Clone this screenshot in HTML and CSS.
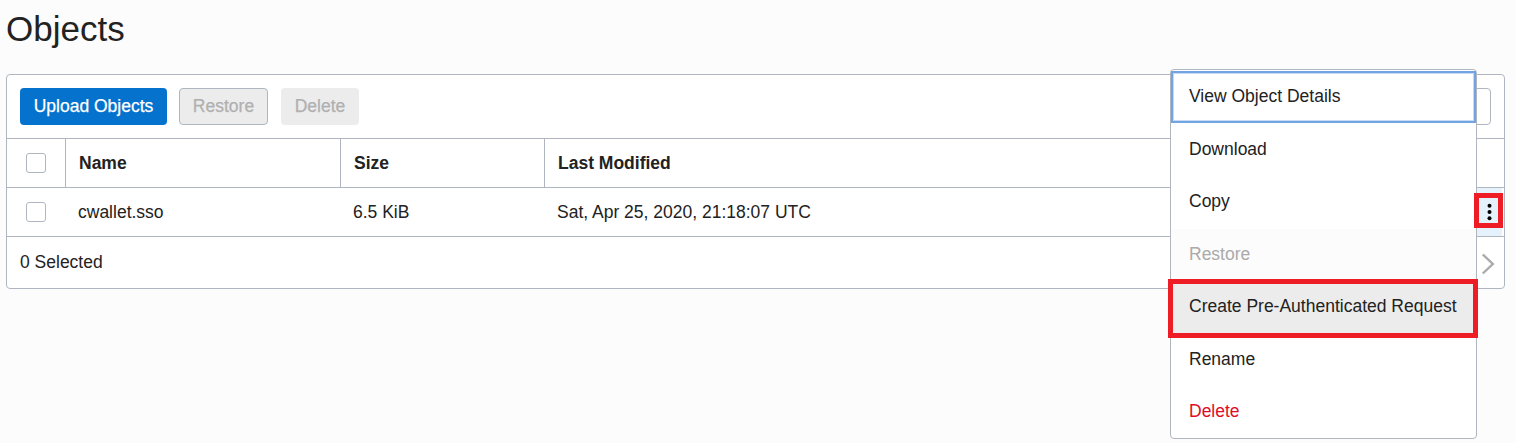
FILE: index.html
```html
<!DOCTYPE html>
<html lang="en">
<head>
<meta charset="utf-8">
<title>Objects</title>
<link rel="stylesheet" href="styles.css">
</head>
<body>
<h1 class="title">Objects</h1>
<section class="card">
  <div class="toolbar">
    <button class="btn primary">Upload Objects</button>
    <button class="btn outlined" disabled>Restore</button>
    <button class="btn muted" disabled>Delete</button>
    <div class="search"></div>
  </div>
  <div class="row head">
    <div class="cell check"><span class="box"></span></div>
    <div class="cell">Name</div>
    <div class="cell">Size</div>
    <div class="cell">Last Modified</div>
  </div>
  <div class="row item">
    <div class="cell check"><span class="box"></span></div>
    <div class="cell">cwallet.sso</div>
    <div class="cell">6.5 KiB</div>
    <div class="cell">Sat, Apr 25, 2020, 21:18:07 UTC</div>
    <div class="actions">
      <div class="kebab">
        <svg width="19" height="25" viewBox="0 0 19 25"><circle cx="10.5" cy="7.7" r="2"/><circle cx="10.5" cy="14" r="2"/><circle cx="10.5" cy="20.3" r="2"/></svg>
      </div>
    </div>
  </div>
  <div class="footer">
    <span>0 Selected</span>
    <svg class="next" width="14" height="22" viewBox="0 0 14 22"><path d="M1.8 1.5 11.8 11 1.8 20.5"/></svg>
  </div>
</section>
<div class="menu">
  <div class="option focused">View Object Details</div>
  <div class="option">Download</div>
  <div class="option">Copy</div>
  <div class="option disabled">Restore</div>
  <div class="option active">Create Pre-Authenticated Request</div>
  <div class="option">Rename</div>
  <div class="option danger">Delete</div>
</div>
</body>
</html>
```
FILE: styles.css
```css
*, *::after { box-sizing: border-box; }
body {
  margin: 0;
  padding: 0 11px 0 6px;
  height: 443px;
  overflow: hidden;
  position: relative;
  background: #fcfcfc;
  color: #222;
  font: 17.5px/20px "Liberation Sans", Arial, sans-serif;
}
.title {
  margin: 0;
  height: 74px;
  padding-top: 9px;
  font-size: 35px;
  line-height: 40px;
  font-weight: 400;
}
.card {
  height: 215px;
  border: 1px solid #afb6c0;
  border-radius: 4px;
  background: #fff;
}
.toolbar {
  display: flex;
  height: 64px;
  padding: 13px;
  border-bottom: 1px solid #afb6c0;
}
.btn {
  height: 37px;
  padding: 0 0 2px;
  border: 0;
  border-radius: 4px;
  font: inherit;
  -webkit-text-stroke: 0.25px currentColor;
}
.primary { width: 147px; margin-right: 12px; background: #0572ce; color: #fff; }
.outlined { width: 89px; margin-right: 13px; border: 1px solid #afb6c0; background: #ececec; color: #b0b0b0; }
.muted { width: 78px; background: #ececec; color: #b0b0b0; }
.search {
  width: 240px;
  height: 37px;
  margin-left: auto;
  border: 1px solid #afb6c0;
  border-radius: 4px;
}
.row {
  display: grid;
  height: 49px;
  border-bottom: 1px solid #afb6c0;
}
.head { grid-template-columns: 58px 275px 204px 1fr; }
.item { grid-template-columns: 59px 275px 204px 1fr 28px; }
.cell { display: flex; align-items: center; padding-left: 12px; }
.head .cell { padding-left: 13px; font-weight: 700; border-left: 1px solid #afb6c0; }
.row .check { padding-left: 19px; border-left: 0; }
.box { width: 20px; height: 20px; border: 1px solid #afb6c0; border-radius: 3px; background: #fff; }
.actions {
  display: flex;
  align-items: flex-start;
  justify-content: flex-end;
  margin-right: 2px;
  padding-top: 5px;
  background: #e5f1fb;
}
.kebab { flex: none; width: 29px; height: 35px; border: 5px solid #ee1c25; margin-right: -1px; position: relative; z-index: 2; }
.kebab svg { display: block; }
.footer { display: flex; justify-content: space-between; align-items: center; height: 49px; padding: 0 9px 0 13px; }
.next { margin-top: 4px; fill: none; stroke: #aaa; stroke-width: 2.4; }
.menu {
  position: absolute;
  left: 1170px;
  top: 69px;
  width: 307px;
  height: 370px;
  padding-top: 1px;
  border: 1px solid #afb6c0;
  border-radius: 4px;
  background: #fff;
}
.option { height: 52.5px; padding: 15px 0 0 18px; white-space: nowrap; }
.focused { height: 52px; margin-bottom: 0.5px; box-shadow: inset 0 0 0 2px #73a4e2, inset 0 0 0 3px #c5daf3; }
.disabled { background: #fcfcfc; color: #aaa; }
.active { position: relative; background: #ececec; }
.active::after {
  content: "";
  position: absolute;
  left: -3px;
  top: -2px;
  width: 310px;
  height: 59px;
  border: 5px solid #ee1c25;
}
.danger { color: #e00b26; }
```
